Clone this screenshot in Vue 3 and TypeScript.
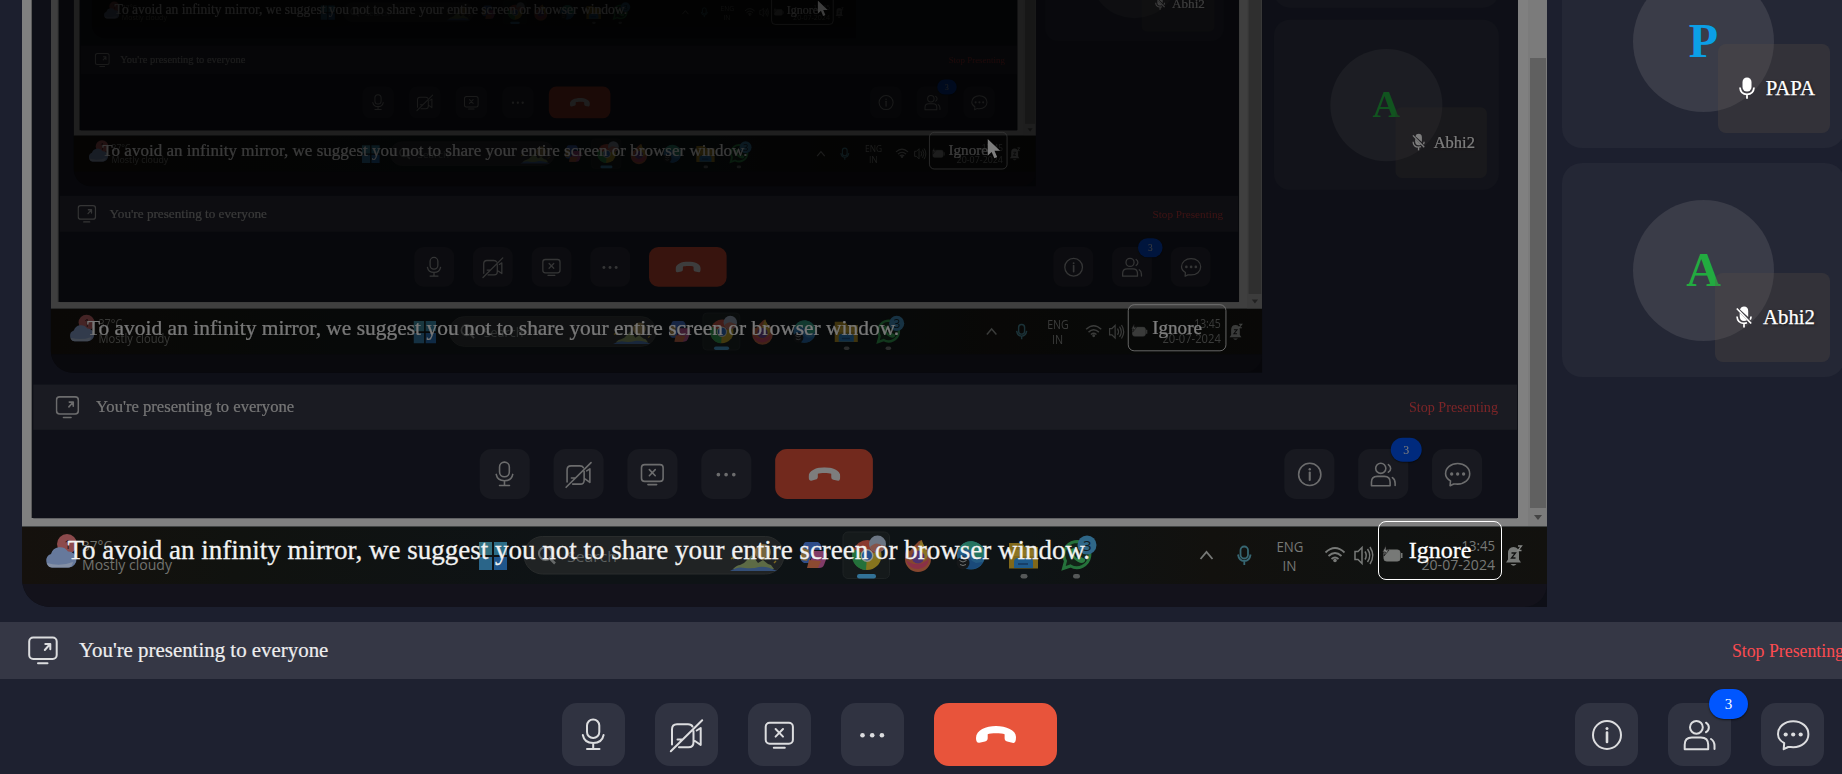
<script setup lang="ts">
interface Participant {
  name: string
  initial: string
  tone: 'blue' | 'green'
  muted: boolean
}

interface Layer {
  depth: number
  style: { transform: string; filter: string }
}

const participants: Participant[] = [
  { name: 'PAPA', initial: 'P', tone: 'blue', muted: false },
  { name: 'Abhi2', initial: 'A', tone: 'green', muted: true },
]

// Each shared screen shows the whole meeting again, smaller and half as bright.
const SCALE_X = 0.7943
const SCALE_Y = 0.795
const OFFSET_X = 33.3
const OFFSET_Y = -109.9

function makeLayer(depth: number): Layer {
  let scaleX = 1
  let scaleY = 1
  let x = 0
  let y = 0
  for (let i = 0; i < depth; i++) {
    x += OFFSET_X * scaleX
    y += OFFSET_Y * scaleY
    scaleX *= SCALE_X
    scaleY *= SCALE_Y
  }
  return {
    depth,
    style: {
      transform: `translate(${x}px, ${y}px) scale(${scaleX}, ${scaleY})`,
      filter: depth === 0 ? 'none' : `brightness(${Math.pow(0.49, depth)})`,
    },
  }
}

const pages: Layer[] = [0, 1, 2, 3].map(makeLayer)
const prompts: Layer[] = [...pages].reverse()
</script>

<template>
  <main class="viewport">
    <div v-for="page in pages" :key="page.depth" class="layer page" :style="page.style">
      <section class="upper">
        <div class="stage">
          <div class="window">
            <div class="window-page"></div>
            <div class="scrollbar">
              <div class="thumb"></div>
              <div class="arrow"></div>
            </div>
          </div>
          <svg class="taskbar" width="1525" height="57" viewBox="22 527 1525 57">
            <circle cx="67" cy="544" r="10" fill="#8c4a4c" />
            <text x="64" y="549" font-size="13" fill="#2a1516">1</text>
            <path d="M52 567.5a7 7 0 0 1-1-13.5 9.500 9.500 0 0 1 17-2.500 8 8 0 0 1 1 16z" fill="#66799c" />
            <path d="M47 563q13 4 26-1-1 5.500-5 5.500H52q-4 0-5-4.500z" fill="#8490a6" />
            <g fill="#72736f" font-size="15">
              <text x="82" y="551" textLength="30" lengthAdjust="spacingAndGlyphs">37°C</text>
              <text x="82" y="570" textLength="90" lengthAdjust="spacingAndGlyphs">Mostly cloudy</text>
            </g>
            <path d="M479 542h13v13h-13z" fill="#347180" /><path d="M494 542h13v13h-13z" fill="#2b6c86" />
            <path d="M479 557h13v13h-13z" fill="#2a6589" /><path d="M494 557h13v13h-13z" fill="#1f568c" />

            <rect x="524" y="536.500" width="260" height="37.500" rx="18.700" fill="#202324" stroke="#292c2c" />
            <circle cx="545.500" cy="553.500" r="6.500" fill="none" stroke="#666969" stroke-width="2.200" />
            <path d="M550 558.500l5 5" stroke="#666969" stroke-width="2.500" />
            <text x="567" y="562" font-size="15" fill="#5c6060" textLength="50" lengthAdjust="spacingAndGlyphs">Search</text>
            <circle cx="763" cy="552" r="8" fill="#75643f" />
            <path d="M733 569q4-4 7-4l4-2 5-5 3-3 6 8 5-3 5 4 3 1 3 4z" fill="#5d6b45" />
            <path d="M730 571q8-5 15-3 8 1 14-1 8-1 18 4z" fill="#344f78" />
            <path d="M732 557l2 2m-3 0l3-2m40 0l2 2m-2 4l2-2" stroke="#7c6821" stroke-width="1.500" />

            <path d="M806 542h12q3 1 4 8h-8l-5 13h-5q-4-2-4-7l3-10q1-4 3-4z" fill="#2e4d8a" />
            <path d="M801 554l2-6 6 2-2 11-6-1z" fill="#80683b" />
            <path d="M814 551h10q4 1 3 6l-3 8q-1 3-5 3h-11z" fill="#803b67" />
            <path d="M809 560l12 1-3 7h-11z" fill="#8b4a31" />

            <rect x="843" y="532" width="46.500" height="46.500" rx="5" fill="#151a1b" stroke="#1e2324" />
            <circle cx="867" cy="555.500" r="14.500" fill="#86741e" />
            <path d="M867 555.500L853.500 550A14.500 14.500 0 0 1 881 550z" fill="#893a30" />
            <path d="M867 555.500L853.500 549A14.500 14.500 0 0 0 866 570z" fill="#24713b" />
            <circle cx="867" cy="555.500" r="6.500" fill="#92958e" /><circle cx="867" cy="555.500" r="5" fill="#214e8b" />
            <circle cx="877.500" cy="544" r="8.500" fill="#6b7583" /><path d="M870 547q5-5 9-3t6 2q-2 7-8 6t-7-5z" fill="#865449" />
            <rect x="857" y="574" width="19" height="4.500" rx="2.200" fill="#327297" />

            <path d="M906 549l4 2 4-5 5-5 3-1 1 5 5 4q4 4 3 10a13 13 0 0 1-26 0q0-6 1-10z" fill="#86472f" />
            <path d="M917 551l4-11 5 9 2 6q-2 6-7 6z" fill="#8a7425" /><circle cx="918" cy="557" r="6.500" fill="#4f326f" />
            <path d="M906 560q11 9 23-1-1 9-11 10-9 0-12-9z" fill="#8a3047" />

            <circle cx="971" cy="555.500" r="14" fill="#245b83" />
            <path d="M958 550q4-9 14-9 12 2 13 14-4 5-10 3 0-8-10-9z" fill="#257461" />
            <path d="M971 552q-4 8 5 11l7-1q-5 8-14 7-9-1-10-10 5-7 12-7z" fill="#1a4a7a" />
            <circle cx="963" cy="563" r="6.500" fill="#151719" /><path d="M959.500 560.500l3.500 1.500 3.500-1.500m-6.500 4l3 1 3-1" fill="none" stroke="#747676" />

            <path d="M1009 543h13l3 4h13v21.500h-29z" fill="#80681a" /><path d="M1010 550h28v6h-28z" fill="#8c7524" />
            <path d="M1014 568v-6q0-4 4-4h11q4 0 4 4v6z" fill="#1f5b8c" /><path d="M1018 564h10" stroke="#173f68" stroke-width="2" />
            <rect x="1020.500" y="574" width="7" height="4.500" rx="2.200" fill="#555858" />

            <path d="M1063.500 568.500l2-7.500a13 13 0 1 1 5 5z" fill="#122318" stroke="#25723b" stroke-width="3" />
            <path d="M1071 549q-3 4 2 9t9 5q4-1 3-4l-4-2-2 2q-4-1-5-5l2-2-2-4z" fill="#2b7d42" />
            <circle cx="1087" cy="545" r="9.500" fill="#2f6788" /><text x="1083" y="550.500" font-size="15" fill="#101a20">3</text>
            <rect x="1073" y="574" width="7" height="4.500" rx="2.200" fill="#555858" />

            <g fill="none" stroke="#777977" stroke-width="1.800">
              <path d="M1200.500 559l6-7 6 7" />
              <path d="M1325.500 552.500q9.500-9 19 0M1328.500 556q6.500-6 13 0M1331.500 559q3.500-3 7 0" />
              <path d="M1355 551.500h3l4-4v16l-4-4h-3zM1365 551.500q2.500 4 0 8M1367.500 549q4.500 6.500 0 13M1370 547q5.500 8.500 0 17" stroke-width="1.500" />
            </g>
            <circle cx="1335" cy="560.500" r="1.800" fill="#777977" />
            <g fill="none" stroke="#376773" stroke-width="1.800"><rect x="1240.500" y="546.500" width="7.500" height="12" rx="3.700" /><path d="M1238 554.500q1 6.500 6.300 6.500t6.300-6.500M1244.300 561v4" /></g>
            <g fill="#777977" font-size="15">
              <text x="1276.500" y="552" textLength="27" lengthAdjust="spacingAndGlyphs">ENG</text>
              <text x="1282.500" y="570.500" textLength="14" lengthAdjust="spacingAndGlyphs">IN</text>
              <text x="1461.500" y="551" textLength="33.500" lengthAdjust="spacingAndGlyphs">13:45</text>
              <text x="1421.500" y="570" textLength="73.500" lengthAdjust="spacingAndGlyphs">20-07-2024</text>
            </g>
            <rect x="1384" y="550" width="16" height="11" rx="2.500" fill="#777977" stroke="#777977" />
            <path d="M1401 553h1.500v5h-1.500" fill="#777977" /><path d="M1386 545.500l-3.500 6.500h3l-1.500 4 5-6h-3z" fill="#878987" stroke="#151515" stroke-width=".7" />
            <path d="M1506 562.500l2-3v-6q0-6.500 5.500-6.500t5.500 6.500v6l2 3zM1510.500 564h6q-3 3.500-6 0z" fill="#777977" />
            <g fill="none" stroke-width="1.300"><path d="M1511.500 553h4l-4 5h4" stroke="#121212" /><path d="M1518 546h3.500l-3.500 4.500h3.500" stroke="#858785" /></g>
          </svg>
          <div class="stage-tail"></div>
        </div>

        <aside class="people">
          <article v-for="person in participants" :key="person.name" class="card">
            <div class="avatar" :class="person.tone">{{ person.initial }}</div>
            <div class="tag">
              <svg v-if="!person.muted" width="16" height="22" viewBox="0 0 16 22">
                <rect x="3.500" y="0.500" width="9" height="14" rx="4.500" fill="#fff" />
                <path d="M1 10.500q.5 6.800 7 6.800t7-6.800M8 17v4.800" fill="none" stroke="#fff" stroke-width="1.800" />
              </svg>
              <svg v-else width="16" height="22" viewBox="0 0 16 22">
                <path d="M4 3.500Q5 .500 8 .500q4.200 0 4.200 4.500v6zM3.700 6.800l7.300 7.400Q9.800 15 8 15q-4.300 0-4.300-5z" fill="#fff" />
                <path d="M.800 2.500l14.400 15M1 10.500q.5 6.800 7 6.800 1.500 0 3-.500M15 10.500q0 1.700-.8 3.200M8 17v4.500" fill="none" stroke="#fff" stroke-width="1.700" />
              </svg>
              <span>{{ person.name }}</span>
            </div>
          </article>
        </aside>
      </section>

      <section class="presenting">
        <svg class="line-icon" width="30" height="30" viewBox="0 0 30 30">
          <rect x="1.200" y="1.500" width="27.500" height="21.500" rx="4" />
          <path d="M10 27.300h9.500M16.800 14L21.700 8.500M17.300 8h5v5.300" />
        </svg>
        <span class="presenting-text">You're presenting to everyone</span>
        <span class="stop">Stop Presenting</span>
      </section>

      <footer class="controls">
        <div class="group">
          <button class="control">
            <svg class="line-icon" width="40" height="40" viewBox="0 0 40 40">
              <rect x="13" y="4.500" width="12.300" height="18.500" rx="6.100" />
              <path d="M8.800 20c1 5.200 4.900 8 10.400 8s9.400-2.800 10.400-8M19.200 28v6M13 34h12.500" />
            </svg>
          </button>
          <button class="control">
            <svg class="line-icon" width="40" height="40" viewBox="0 0 40 40">
              <path d="M25.500 11.500Q24.500 9.300 21 9.300h-11Q5 9.300 5 14.300v15.200M12 32.200h9.500q5 0 5-5V16M28 26l5.700 4V13l-4 2.500M10.500 24.500h5M3.800 36.200L35.200 5.200" />
            </svg>
          </button>
          <button class="control">
            <svg class="line-icon" width="40" height="40" viewBox="0 0 40 40">
              <rect x="5.700" y="7.700" width="27.200" height="21" rx="4" />
              <path d="M13.800 32.800h11M15.600 14l7.400 7.600M23 14l-7.400 7.600" />
            </svg>
          </button>
          <button class="control">
            <svg width="40" height="40" viewBox="0 0 40 40" fill="#dcdddf">
              <circle cx="9.500" cy="20.300" r="2.300" /><circle cx="19.200" cy="20.300" r="2.300" /><circle cx="28.900" cy="20.300" r="2.300" />
            </svg>
          </button>
          <button class="control end">
            <svg width="40" height="18" viewBox="0 0 40 18">
              <path d="M0 12C0 4 10 0 20 0s20 4 20 11c0 4.500-1 6.200-2.800 5.900l-6-1.300c-2-.5-2.600-1.600-2.600-3.600V8.200C25.500 6.800 14.500 6.800 11.700 8.200V12c0 2-.8 3-2.700 3.500l-5.600 1.300C1 17.200 0 15 0 12z" fill="#fff" />
            </svg>
          </button>
        </div>
        <div class="group side">
          <button class="control">
            <svg class="line-icon" width="40" height="40" viewBox="0 0 40 40">
              <circle cx="20" cy="20" r="14" /><path d="M20 17.500v9.500" stroke-width="2.600" />
              <circle cx="20" cy="13.500" r="1.500" fill="#dcdddf" stroke="none" />
            </svg>
          </button>
          <button class="control">
            <svg class="line-icon" width="40" height="40" viewBox="0 0 40 40">
              <circle cx="16.400" cy="12.300" r="6.400" />
              <path d="M4.700 34.200v-4.500c0-4.800 2.600-7.300 7.200-7.300h9c4.700 0 7.300 2.500 7.300 7.300v4.500zM26 7.700c3.800 2.500 3.800 7 0 9.500M31 24c2.500 1.500 3.500 4 3.500 7v3" />
            </svg>
            <span class="badge">3</span>
          </button>
          <button class="control">
            <svg class="line-icon" width="40" height="40" viewBox="0 0 40 40">
              <path d="M10.700 34.200l.500-6C7.200 25.900 5 23.200 5 19.200 5 11.700 11.700 6.200 20.200 6.200S35.400 11.700 35.400 19.200 28.700 32.200 20.200 32.200c-2 0-3.500-.3-5-.2z" />
              <g fill="#dcdddf" stroke="none"><circle cx="12.700" cy="19.500" r="2.100" /><circle cx="20.200" cy="19.500" r="2.100" /><circle cx="27.700" cy="19.500" r="2.100" /></g>
            </svg>
          </button>
        </div>
      </footer>
    </div>

    <div v-for="prompt in prompts" :key="`prompt-${prompt.depth}`" class="layer prompt-layer" :style="prompt.style">
      <div class="prompt">
        <span class="message">To avoid an infinity mirror, we suggest you not to share your entire screen or browser window.</span>
        <button class="ignore">Ignore</button>
      </div>
      <svg v-if="prompt.depth > 0" class="cursor" width="18" height="26" viewBox="0 0 18 26">
        <path d="M.500 0v21l5-4.700 3.500 8 3.500-1.600-3.400-7.700h7z" fill="#fff" />
      </svg>
    </div>
  </main>
</template>

<style>
body {
  margin: 0;
  background: #1c1f2e;
}
</style>

<style scoped>
.viewport {
  position: relative;
  width: 1842px;
  height: 774px;
  overflow: hidden;
  background: #1c1f2e;
  font-family: "Liberation Serif", "Times New Roman", serif;
}
.layer {
  position: absolute;
  top: 0;
  left: 0;
  width: 1868px;
  height: 790px;
  transform-origin: 0 0;
}
.page {
  display: flex;
  flex-direction: column;
  background: #1c1f2e;
}
.upper {
  display: flex;
  flex: none;
  height: 622px;
  overflow: hidden;
}
.stage {
  display: flex;
  flex: none;
  flex-direction: column;
  width: 1525px;
  height: 607px;
  margin-left: 22px;
  overflow: hidden;
  background: #0e0f17;
  border-bottom-left-radius: 28px;
}
.window {
  display: flex;
  justify-content: space-between;
  box-sizing: border-box;
  height: 527px;
  padding-left: 9px;
  background: #808080;
  border-bottom: 1px solid #414444;
}
.window-page {
  box-sizing: border-box;
  width: 1487px;
  height: 518px;
  background: #0e1017;
  border-left: 1px solid #5b5b5b;
}
.scrollbar {
  display: flex;
  flex-direction: column;
  align-items: center;
  box-sizing: border-box;
  width: 19px;
  padding-top: 58px;
  background: #7b7b7b;
}
.thumb {
  width: 16px;
  height: 450px;
  background: #606060;
}
.arrow {
  margin-top: 7px;
  border: 4.500px solid transparent;
  border-top: 5px solid #444;
  border-bottom: 0;
}
.taskbar {
  display: block;
  flex: none;
  font-family: "Open Sans", "Noto Sans", sans-serif;
  background: linear-gradient(90deg, #15110d 0, #10120f 14%, #0e1316 36%, #0e1315 66%, #12110e 78%, #101211 90%, #12110e 100%);
}
.stage-tail {
  flex: 1;
  background: #13121b;
  border-bottom-right-radius: 28px;
}
.people {
  display: flex;
  flex-direction: column;
  gap: 15px;
  width: 283px;
  margin: -66px 0 0 15px;
}
.card {
  position: relative;
  display: flex;
  flex: none;
  align-items: center;
  justify-content: center;
  height: 214px;
  background: #242735;
  border-radius: 20px;
}
.avatar {
  display: flex;
  align-items: center;
  justify-content: center;
  box-sizing: border-box;
  width: 141px;
  height: 141px;
  padding-bottom: 2px;
  border-radius: 50%;
  background: #3a3c48;
  font-size: 48px;
  font-weight: 700;
}
.avatar.blue {
  color: #0b9fe6;
}
.avatar.green {
  color: #22ab40;
}
.tag {
  position: absolute;
  right: 15px;
  bottom: 15px;
  display: flex;
  align-items: center;
  gap: 11px;
  box-sizing: border-box;
  height: 89px;
  padding: 0 15px 1px 21px;
  background: rgba(91, 80, 71, 0.27);
  border-radius: 8px;
  color: #fff;
  font-size: 20.800px;
  -webkit-text-stroke: 0.250px #fff;
  text-shadow: 1px 1px 3px rgba(0, 0, 0, 0.6);
}
.presenting {
  display: flex;
  flex: none;
  align-items: center;
  box-sizing: border-box;
  height: 57px;
  padding: 0 24px 0 28px;
  background: #353745;
}
.presenting-text {
  margin-left: 21px;
  color: #eeeeef;
  font-size: 20.900px;
  -webkit-text-stroke: 0.200px #eeeeef;
}
.stop {
  margin: 1px 0 0 auto;
  color: #fd4b50;
  font-size: 17.800px;
}
.line-icon {
  fill: none;
  stroke: #dcdddf;
  stroke-width: 2;
  stroke-linecap: round;
  stroke-linejoin: round;
}
.controls {
  display: flex;
  flex: 1;
  align-items: flex-start;
  justify-content: space-between;
  padding: 24px 44px 0 562px;
  background: #1e2130;
}
.group {
  display: flex;
  gap: 30px;
}
.control {
  position: relative;
  display: flex;
  align-items: center;
  justify-content: center;
  width: 63px;
  height: 63px;
  padding: 0;
  border: 0;
  border-radius: 15px;
  background: #303341;
}
.end {
  width: 123px;
  background: #e8543b;
}
.badge {
  position: absolute;
  top: -14px;
  right: -17px;
  width: 39px;
  height: 30px;
  border-radius: 15px;
  background: #0056ff;
  color: #fff;
  font-family: "Liberation Serif", "Times New Roman", serif;
  font-size: 15px;
  line-height: 31px;
  text-align: center;
  box-shadow: 0 1px 2px rgba(0, 0, 0, 0.6);
}
.prompt-layer {
  pointer-events: none;
}
.prompt {
  display: flex;
  align-items: center;
  justify-content: space-between;
  box-sizing: border-box;
  width: 1502px;
  height: 59px;
  margin-top: 521px;
  padding-left: 67.500px;
}
.message {
  color: #f2f2f2;
  font-size: 27px;
  -webkit-text-stroke: 0.300px #f2f2f2;
  white-space: nowrap;
}
.ignore {
  box-sizing: border-box;
  width: 124px;
  height: 59px;
  padding: 0;
  border: 1.500px solid #fff;
  border-radius: 8px;
  background: transparent;
  color: #fff;
  font-family: inherit;
  font-size: 24px;
  -webkit-text-stroke: 0.300px #fff;
}
.cursor {
  position: absolute;
  top: 313px;
  left: 1201px;
}
</style>
